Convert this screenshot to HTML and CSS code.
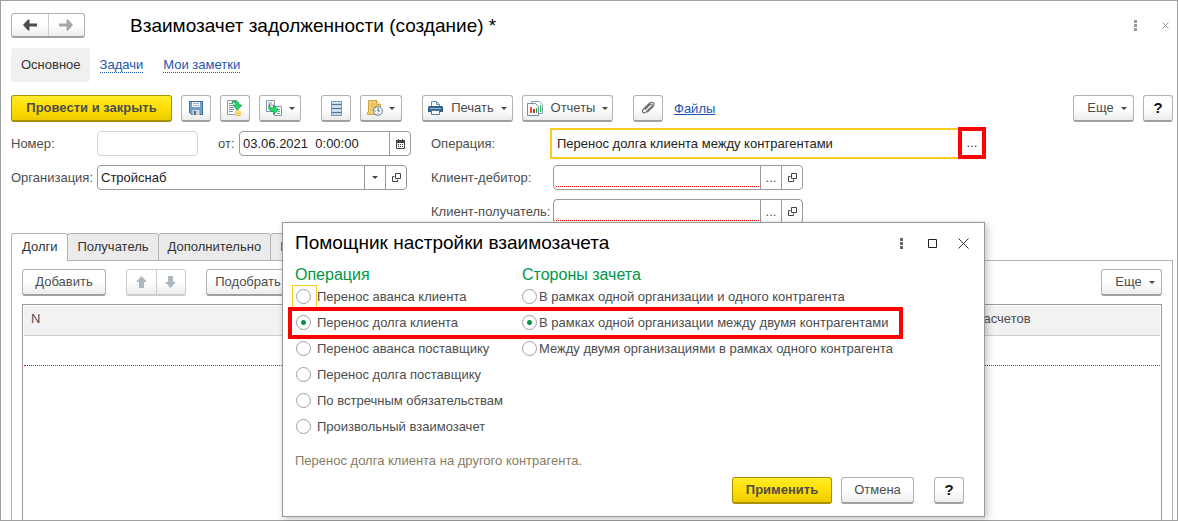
FILE: index.html
```html
<!DOCTYPE html>
<html lang="ru">
<head>
<meta charset="utf-8">
<title>Взаимозачет задолженности (создание)</title>
<link rel="stylesheet" href="styles.css">
</head>
<body>
<svg class="defs" aria-hidden="true">
  <symbol id="open" viewBox="0 0 9 9"><path d="M3.500 .5h5v5h-5zM2.500 3.500h-2v5h5v-2" fill="none" stroke="#444"/></symbol>
</svg>
<main class="window">
  <header class="titlebar">
    <div class="pair">
      <button class="pair-btn" type="button" aria-label="Назад"><svg width="14" height="12" viewBox="0 0 14 12"><path d="M0 6l5-5.500h1.500V4.500H14v3H6.500v4H5z" fill="#4d4d4d"/></svg></button>
      <button class="pair-btn" type="button" aria-label="Вперед"><svg width="14" height="12" viewBox="0 0 14 12"><path d="M14 6L9 .5H7.500V4.500H0v3h7.500v4H9z" fill="#a6a6a6"/></svg></button>
    </div>
    <h1 class="title">Взаимозачет задолженности (создание) *</h1>
    <div class="win-actions">
      <button class="ghost" type="button" aria-label="Меню"><svg width="3" height="11" fill="#999"><path d="M0 0h3v3H0zM0 4h3v3H0zM0 8h3v3H0z"/></svg></button>
      <button class="ghost" type="button" aria-label="Закрыть"><svg width="7" height="7"><path d="M.5 .5l6 6M6.500 .5l-6 6" stroke="#999"/></svg></button>
    </div>
  </header>

  <nav class="nav">
    <span class="nav-current">Основное</span>
    <a class="nav-link" href="#tasks">Задачи</a>
    <a class="nav-link" href="#notes">Мои заметки</a>
  </nav>

  <div class="toolbar">
    <div class="group">
      <button class="btn primary wide" type="button">Провести и закрыть</button>
      <button class="btn icon" type="button" aria-label="Записать"><svg width="14" height="14" viewBox="0 0 14 14"><path d="M.5 .5h13v13h-11l-2-2z" fill="#6f9fcc" stroke="#39699a"/><path d="M3 1h8v5H3z" fill="#f4f8fb"/><path d="M4 2.500h6M4 4.500h6" stroke="#9db8d0"/><path d="M3.500 9h7v5h-7z" fill="#d2d4d5"/><path d="M5 10h2v4H5z" fill="#456f9b"/></svg></button>
      <button class="btn icon" type="button" aria-label="Провести"><svg width="16" height="16" viewBox="0 0 16 16"><path d="M.5 .5h9v14H.5z" fill="#fff" stroke="#8a9fad"/><path d="M2 3.500h4M2 5.500h5M2 7.500h5M2 9.500h5M2 11.500h4" stroke="#7a8e9b"/><path d="M5 1.500c4-1.500 7 0 7 3.500h3l-4.500 5L6 5h3c0-2-1.500-2.500-4-2.500z" fill="#25d366" stroke="#10994b" stroke-width=".8"/><path d="M8 11.500v3c0 2 6 2 6 0v-3z" fill="#ebb42d"/><ellipse cx="11" cy="11.500" rx="3" ry="1.500" fill="#ffdc68"/><path d="M8 13.500c1 1.300 5 1.300 6 0" stroke="#fff1b6" fill="none"/></svg></button>
      <button class="btn drop" type="button" aria-label="Создать на основании"><svg width="17" height="16" viewBox="0 0 17 16"><path d="M.5 .5h8v11h-8zM8.500 6.500h7v9h-7z" fill="#fff" stroke="#8197a7"/><path d="M2 3h4M2 5h5M11 9.500h3M12 11.500h2M11 13.500h3" stroke="#8197a7"/><path d="M3.500 4.500c0 3 1.500 3.500 4 3.500V5l5 5-5 4.500v-3c-4 0-6-3-4-7z" fill="#25d96a" stroke="#0d9a48" stroke-width=".8"/></svg><i class="caret"></i></button>
    </div>
    <div class="group">
      <button class="btn icon" type="button" aria-label="Реестр"><svg width="11" height="15" viewBox="0 0 11 15"><path d="M.5 .5h10v14H.5z" fill="#c0d5e6" stroke="#7699b5"/><path d="M1 3.500h9M1 7.500h9M1 11.500h9" stroke="#4e7595"/><path d="M1 1.500h9M1 5.500h9M1 9.500h9" stroke="#dce9f2"/></svg></button>
      <button class="btn drop" type="button" aria-label="Напоминание"><svg width="16" height="16" viewBox="0 0 16 16"><path d="M1.500 .5h8l4 4v10h-13v-2h1z" fill="#f1cf78" stroke="#d0a23c"/><path d="M9.500 .5v4h4" fill="#fae9b7" stroke="#d0a23c"/><path d="M4 4h4M4 6.500h6M4 9h3" stroke="#d9ad4c"/><circle cx="11" cy="11" r="4.300" fill="#fff" stroke="#537ca7"/><path d="M11 8v3h2" fill="none" stroke="#45566c"/><path d="M8 11h1M11 13v1" stroke="#f33"/></svg><i class="caret"></i></button>
    </div>
    <div class="group">
      <button class="btn labeled" type="button"><svg width="15" height="14" viewBox="0 0 15 14"><path d="M3.500 5V.5h5l3 3V5" fill="#fff" stroke="#6c8eac"/><path d="M8.500 .5v3h3" fill="none" stroke="#6c8eac"/><path d="M1 5h13l1 1v5H0V6z" fill="#31628f"/><path d="M2 7.500h11" stroke="#9bb8d0"/><path d="M3.500 9.500h8v4h-8z" fill="#fff" stroke="#54799a"/></svg>Печать<i class="caret"></i></button>
      <button class="btn labeled" type="button"><svg width="16" height="15" viewBox="0 0 16 15"><path d="M4.500 .5h8l3 3v9h-11z" fill="#fff" stroke="#86a0b3"/><path d="M.5 2.500h8l3 3v9H.5z" fill="#fff" stroke="#708da3"/><path d="M3 6h2v6H3z" fill="#f14b32"/><path d="M6 8h2v4H6z" fill="#d73125"/><path d="M9 7h1v5H9z" fill="#15a83d"/><path d="M13 4h1v7h-1z" fill="#2dbd50"/></svg>Отчеты<i class="caret"></i></button>
    </div>
    <div class="group">
      <button class="btn icon" type="button" aria-label="Прикрепить"><svg width="14" height="14" viewBox="0 0 14 14"><path d="M4 8.500l5-5c1.500-1.300 3 .2 1.800 1.600l-6 6c-2.200 2-4.600-.5-2.600-2.600l6-6C11-.3 14.800 2.500 12.200 5.300l-6 6" fill="none" stroke="#686868" stroke-width="1.100"/></svg></button>
      <a class="files" href="#files">Файлы</a>
    </div>
    <div class="group end">
      <button class="btn more" type="button">Еще<i class="caret"></i></button>
      <button class="btn icon help" type="button">?</button>
    </div>
  </div>

  <form class="form">
    <div class="column">
      <div class="row">
        <label class="label" for="num">Номер:</label>
        <input class="number" id="num" type="text">
        <label class="from" for="date">от:</label>
        <div class="field date"><input class="input" id="date" type="text" value="03.06.2021  0:00:00"><button class="part" type="button" aria-label="Календарь"><svg width="9" height="10" viewBox="0 0 9 10"><path d="M.5 1.500h8v8h-8z" fill="none" stroke="#444"/><path d="M0 1h9v3H0zM2 0h1v2H2zM6 0h1v2H6z" fill="#444"/><path d="M2 5.500h5M2 7.500h5" stroke="#444" stroke-dasharray="1 1"/></svg></button></div>
      </div>
      <div class="row">
        <label class="label" for="org">Организация:</label>
        <div class="field org"><input class="input" id="org" type="text" value="Стройснаб"><button class="part" type="button" aria-label="Выбрать"><i class="caret"></i></button><button class="part" type="button" aria-label="Открыть"><svg width="9" height="9"><use href="#open"/></svg></button></div>
      </div>
    </div>
    <div class="column">
      <div class="row">
        <label class="label-wide" for="oper">Операция:</label>
        <div class="active"><input class="input" id="oper" type="text" value="Перенос долга клиента между контрагентами"><button class="marked" type="button" aria-label="Выбрать операцию">...</button></div>
      </div>
      <div class="row">
        <label class="label-wide" for="deb">Клиент-дебитор:</label>
        <div class="field client"><input class="input required" id="deb" type="text"><button class="part" type="button">...</button><button class="part" type="button" aria-label="Открыть"><svg width="9" height="9"><use href="#open"/></svg></button></div>
      </div>
      <div class="row">
        <label class="label-wide" for="rec">Клиент-получатель:</label>
        <div class="field client"><input class="input required" id="rec" type="text"><button class="part" type="button">...</button><button class="part" type="button" aria-label="Открыть"><svg width="9" height="9"><use href="#open"/></svg></button></div>
      </div>
    </div>
  </form>

  <div class="tabs">
    <button class="tab selected" type="button">Долги</button>
    <button class="tab" type="button">Получатель</button>
    <button class="tab" type="button">Дополнительно</button>
    <button class="tab" type="button">К</button>
  </div>
  <section class="panel">
    <div class="panel-bar">
      <button class="btn add" type="button">Добавить</button>
      <div class="pair faded">
        <button class="pair-btn" type="button" aria-label="Вверх"><svg width="11" height="12" viewBox="0 0 11 12"><path d="M5.500 0L11 6H8v6H3V6H0z" fill="#adb8be"/></svg></button>
        <button class="pair-btn" type="button" aria-label="Вниз"><svg width="11" height="12" viewBox="0 0 11 12"><path d="M5.500 12L11 6H8V0H3v6H0z" fill="#adb8be"/></svg></button>
      </div>
      <button class="btn pick" type="button">Подобрать</button>
      <button class="btn more end" type="button">Еще<i class="caret"></i></button>
    </div>
    <div class="grid">
      <table class="table">
        <thead><tr><th>N</th><th class="doc">Документ расчетов</th></tr></thead>
        <tbody><tr><td></td><td></td></tr></tbody>
      </table>
    </div>
  </section>
</main>

<section class="dialog" role="dialog" aria-labelledby="dlg">
  <header class="dialog-head">
    <h2 class="dialog-title" id="dlg">Помощник настройки взаимозачета</h2>
    <div class="dialog-actions">
      <button class="ghost" type="button" aria-label="Меню"><svg width="3" height="11" fill="#666"><path d="M0 0h3v3H0zM0 4h3v3H0zM0 8h3v3H0z"/></svg></button>
      <button class="ghost" type="button" aria-label="Развернуть"><svg width="9" height="9"><path d="M.5 .5h8v8h-8z" fill="none" stroke="#222"/></svg></button>
      <button class="ghost" type="button" aria-label="Закрыть"><svg width="11" height="11"><path d="M.5 .5l10 10M10.500 .5l-10 10" stroke="#333"/></svg></button>
    </div>
  </header>
  <div class="choices">
    <fieldset class="choice-set">
      <legend class="legend">Операция</legend>
      <label class="choice focused"><input class="radio" type="radio" name="op">Перенос аванса клиента</label>
      <label class="choice"><input class="radio" type="radio" name="op" checked>Перенос долга клиента</label>
      <label class="choice"><input class="radio" type="radio" name="op">Перенос аванса поставщику</label>
      <label class="choice"><input class="radio" type="radio" name="op">Перенос долга поставщику</label>
      <label class="choice"><input class="radio" type="radio" name="op">По встречным обязательствам</label>
      <label class="choice"><input class="radio" type="radio" name="op">Произвольный взаимозачет</label>
    </fieldset>
    <fieldset class="choice-set">
      <legend class="legend">Стороны зачета</legend>
      <label class="choice"><input class="radio" type="radio" name="side">В рамках одной организации и одного контрагента</label>
      <label class="choice"><input class="radio" type="radio" name="side" checked>В рамках одной организации между двумя контрагентами</label>
      <label class="choice"><input class="radio" type="radio" name="side">Между двумя организациями в рамках одного контрагента</label>
    </fieldset>
    <div class="highlight"></div>
  </div>
  <p class="hint">Перенос долга клиента на другого контрагента.</p>
  <footer class="dialog-foot">
    <button class="btn primary apply" type="button">Применить</button>
    <button class="btn cancel" type="button">Отмена</button>
    <button class="btn icon help" type="button">?</button>
  </footer>
</section>
</body>
</html>
```

FILE: styles.css
```css
* { box-sizing: border-box; }
body {
  margin: 0;
  background: #fff;
  color: #4d4d4d;
  font-family: "Liberation Sans", Arial, sans-serif;
  font-size: 13px;
  line-height: 16px;
}
button, input {
  margin: 0;
  padding: 0;
  border: 0;
  background: none;
  color: inherit;
  font: inherit;
}
svg { display: block; flex: none; }
.defs { position: absolute; width: 0; height: 0; }
.window {
  display: flex;
  flex-direction: column;
  height: 100vh;
  min-height: 400px;
  padding: 0 4px 0 10px;
  overflow: hidden;
  border: 1px solid #a0a0a0;
}

/* title bar */
.titlebar { display: flex; align-items: center; height: 47px; padding-top: 2px; }
.pair {
  display: flex;
  width: 74px;
  height: 25px;
  border: 1px solid #b3b3b3;
  border-bottom: 2px solid #a0a0a0;
  border-radius: 3px;
  background: linear-gradient(#fff 50%, #ededed);
}
.pair-btn { display: flex; flex: 1; align-items: center; justify-content: center; }
.pair-btn + .pair-btn { border-left: 1px solid #ccc; }
.title { margin: 0 0 0 45px; color: #000; font-size: 19px; line-height: 24px; font-weight: 400; }
.win-actions { display: flex; align-items: center; gap: 25px; margin-left: auto; padding-right: 4px; }
.ghost { display: flex; align-items: center; justify-content: center; }

/* navigation */
.nav { display: flex; align-items: center; height: 34px; }
.nav-current { padding: 9px 9px 9px 10px; border-radius: 3px; background: #f0f0f0; color: #333; }
.nav-link {
  margin-left: 10px;
  border-bottom: 1px dotted #1c55ae;
  color: #1c55ae;
  line-height: 14px;
  text-decoration: none;
}
.nav-link + .nav-link { margin-left: 20px; }

/* buttons */
.btn {
  display: flex;
  flex: none;
  align-items: center;
  justify-content: center;
  height: 27px;
  border: 1px solid #b3b3b3;
  border-bottom: 2px solid #a0a0a0;
  border-radius: 3px;
  background: linear-gradient(#fff 50%, #ececec);
  white-space: nowrap;
}
.primary {
  border-color: #a89000;
  background: linear-gradient(#ffec2e, #ffdf00 50%, #ebcb00);
  font-weight: 700;
}
.wide { width: 161px; }
.icon { width: 30px; }
.drop { width: 42px; gap: 6px; }
.labeled { width: 91px; gap: 8px; }
.labeled .caret { margin-left: -1px; }
.more { width: 61px; padding-left: 7px; gap: 7px; }
.help { color: #111; font-size: 15px; font-weight: 700; }
.caret { border: 3px solid transparent; border-top-color: #444; border-bottom: 0; }
.toolbar { display: flex; gap: 20px; height: 40px; padding-top: 13px; }
.group { display: flex; align-items: center; gap: 9px; }
.end { margin-left: auto; }
.files { margin-left: 2px; color: #1c55ae; }

/* form */
.form { display: flex; padding-top: 9px; }
.column { display: flex; flex-direction: column; gap: 9px; width: 420px; }
.column + .column { flex: 1; }
.row { display: flex; align-items: center; height: 25px; }
.label { width: 86px; white-space: nowrap; }
.label-wide { width: 122px; white-space: nowrap; }
.number { width: 101px; height: 25px; border: 1px solid #d5d5d5; border-radius: 4px; }
.from { width: 41px; padding-left: 20px; }
.field { display: flex; height: 25px; border: 1px solid #999; border-radius: 4px; }
.date { width: 172px; }
.org { width: 310px; }
.client { width: 250px; }
.input { flex: 1; min-width: 0; padding: 0 3px; color: #222; white-space: pre; }
.part {
  display: flex;
  flex: none;
  align-items: center;
  justify-content: center;
  width: 21px;
  border-left: 1px solid #999;
}
.required {
  margin: 0 1px 2px 2px;
  border-bottom: 1px dotted #f00;
}
.active {
  display: flex;
  width: 436px;
  height: 31px;
  margin: -3px 0 -3px -3px;
  border: 2px solid #fbca1e;
  border-right: 0;
}
.active .input { padding-left: 5px; }
.marked { width: 28px; margin: -3px 0 -2px; border: 4px solid #f00; color: #333; }

/* tabs and table */
.tabs { display: flex; height: 28px; margin-top: 9px; position: relative; z-index: 1; }
.tab {
  height: 28px;
  margin-left: -1px;
  padding: 0 9px;
  border: 1px solid #b3b3b3;
  border-radius: 3px 3px 0 0;
  background: #ebebeb;
  color: #333;
}
.tab.selected { margin-left: 0; padding: 0 10px; border-bottom-color: #fff; background: #fff; }
.panel {
  display: flex;
  flex: 1;
  flex-direction: column;
  min-height: 0;
  margin-top: -1px;
  padding: 8px 10px 0;
  border: 1px solid #b3b3b3;
  border-bottom: 0;
}
.panel-bar { display: flex; gap: 20px; }
.add { width: 84px; }
.pick { width: 84px; }
.faded { width: 60px; height: 27px; border-color: #ccc; }
.grid { flex: 1; min-height: 0; margin-top: 8px; padding: 1px; border: 1px solid #999; border-bottom: 0; }
.table { width: 100%; border-spacing: 0; }
.table th {
  height: 30px;
  padding: 0 7px 3px;
  border-bottom: 1px solid #ccc;
  background: #f2f2f2;
  font-weight: 400;
  text-align: left;
}
.table .doc { width: 252px; }
.table td { height: 30px; padding: 0; border-bottom: 1px dotted #f00; }

/* dialog window */
.dialog {
  position: absolute;
  z-index: 2;
  top: 222px;
  left: 282px;
  width: 703px;
  padding: 0 20px 12px 12px;
  border: 1px solid #999;
  background: #fff;
  box-shadow: 2px 2px 7px rgba(0, 0, 0, .25);
}
.dialog-head { display: flex; align-items: center; height: 42px; padding-bottom: 2px; }
.dialog-title { margin: 0; color: #000; font-size: 19px; line-height: 22px; font-weight: 400; }
.dialog-actions { display: flex; align-items: center; gap: 20px; margin: 0 -5px 0 auto; }
.dialog-actions .ghost { width: 11px; }
.choices { display: grid; grid-template-columns: 227px 1fr; align-items: start; position: relative; }
.choice-set { min-width: 0; margin: 0; padding: 0; border: 0; }
.legend { padding: 1px 0 0; color: #009646; font-size: 16px; line-height: 18px; }
.choice {
  display: flex;
  align-items: center;
  gap: 6px;
  height: 26px;
  padding-left: 1px;
  position: relative;
  white-space: nowrap;
}
.choice-set + .choice-set .choice { gap: 2px; padding-left: 0; }
.radio {
  appearance: none;
  width: 15px;
  height: 15px;
  margin-bottom: 1px;
  border: 1px solid #a0a0a0;
  border-radius: 50%;
  background: #fff;
}
.radio:checked { background: radial-gradient(circle, #009646 2px, #fff 3px); }
.focused::before {
  content: "";
  position: absolute;
  top: 1px;
  left: -3px;
  width: 23px;
  height: 24px;
  border: 1px solid #fbca1e;
}
.highlight {
  position: absolute;
  top: 42px;
  left: -7px;
  width: 615px;
  height: 32px;
  border: 4px solid #f00;
}
.hint { margin: 13px 0 0; color: #877c62; }
.dialog-foot { display: flex; justify-content: flex-end; gap: 9px; margin-top: 8px; }
.apply { width: 100px; }
.cancel { width: 73px; margin-right: 11px; }
```
